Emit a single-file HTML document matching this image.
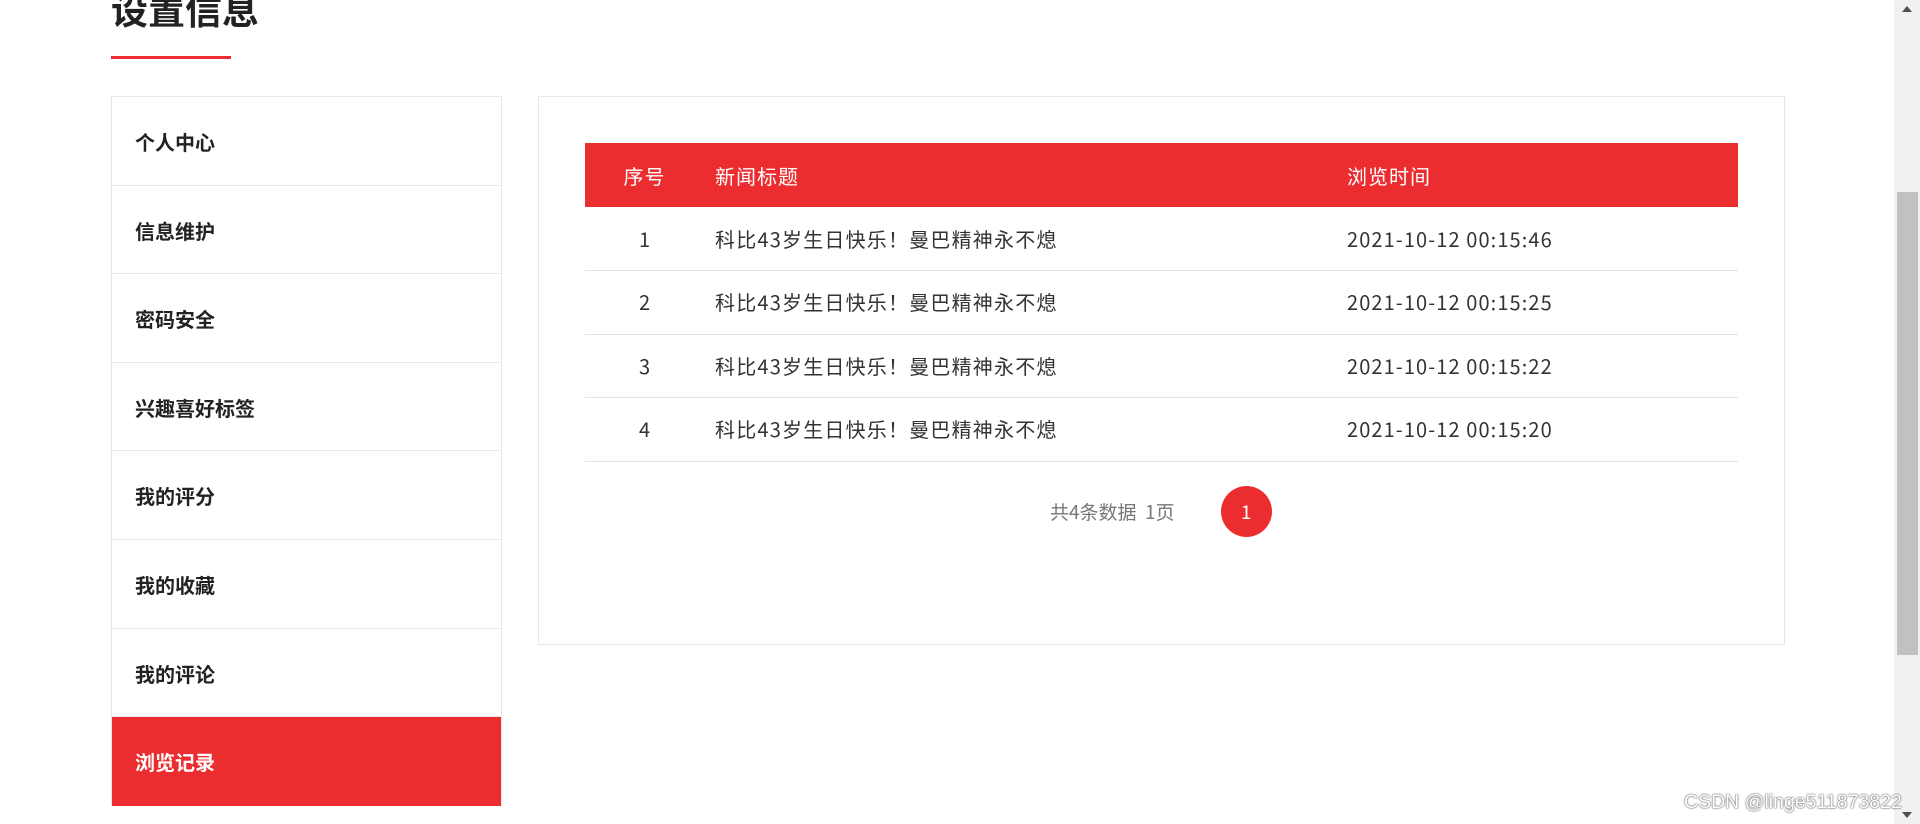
<!DOCTYPE html>
<html><head><meta charset="utf-8"><style>
*{margin:0;padding:0;box-sizing:border-box}
body{width:1920px;height:824px;background:#fff;overflow:hidden;position:relative;font-family:"Liberation Sans","Noto Sans CJK SC",sans-serif;color:#222}
.title{position:absolute;left:111px;top:-10px;font-size:37px;font-weight:bold;color:#222;line-height:44px}
.line{position:absolute;left:111px;top:56px;width:120px;height:3px;background:#ec2d2f}
.side{position:absolute;left:111px;top:96px;width:391px;border:1px solid #e8e8e8;border-bottom:none}
.side div{height:88.6px;border-bottom:1px solid #e8e8e8;font-size:20px;font-weight:bold;padding-left:23px;line-height:94px;color:#222}
.side div.on{background:#ec2d2f;color:#fff;border-bottom:none}
.panel{position:absolute;left:538px;top:96px;width:1247px;height:549px;border:1px solid #e8e8e8}
table{position:absolute;left:46px;top:46px;width:1153px;border-collapse:collapse;font-size:20px;font-family:"Noto Sans CJK SC",sans-serif}
th{background:#ec2d2f;color:#fff;font-weight:normal;height:64px;text-align:left;letter-spacing:1px}
td{height:63.5px;border-bottom:1px solid #e3e3e3;color:#333;line-height:24px}
td.t{letter-spacing:1.2px}
td.d{letter-spacing:1.1px}
.c1{width:130px;text-align:center;padding-right:11px}
.c2{width:632px}
.pg{position:absolute;left:511px;top:389px;font-size:19px;color:#777;line-height:51px;font-family:"Noto Sans CJK SC",sans-serif}
.pg span.n{display:inline-block;width:51px;height:51px;border-radius:50%;background:#ec2d2f;color:#fff;text-align:center;margin-left:46px;vertical-align:top}
.sb{position:absolute;left:1894px;top:0;width:26px;height:824px;background:#f1f1f1}
.th{position:absolute;left:1897px;top:192px;width:21px;height:463px;background:#c1c1c1}
.wm{position:absolute;left:1684px;top:791px;font-size:19.5px;color:#fff;text-shadow:0 0 2px #666,0 0 1px #333}
</style></head><body>
<div class="title">设置信息</div>
<div class="line"></div>
<div class="side">
<div>个人中心</div><div>信息维护</div><div>密码安全</div><div>兴趣喜好标签</div><div>我的评分</div><div>我的收藏</div><div>我的评论</div><div class="on">浏览记录</div>
</div>
<div class="panel">
<table>
<tr><th class="c1">序号</th><th class="c2">新闻标题</th><th>浏览时间</th></tr>
<tr><td class="c1">1</td><td class="t">科比43岁生日快乐！曼巴精神永不熄</td><td class="d">2021-10-12 00:15:46</td></tr>
<tr><td class="c1">2</td><td class="t">科比43岁生日快乐！曼巴精神永不熄</td><td class="d">2021-10-12 00:15:25</td></tr>
<tr><td class="c1">3</td><td class="t">科比43岁生日快乐！曼巴精神永不熄</td><td class="d">2021-10-12 00:15:22</td></tr>
<tr><td class="c1">4</td><td class="t">科比43岁生日快乐！曼巴精神永不熄</td><td class="d">2021-10-12 00:15:20</td></tr>
</table>
<div class="pg">共4条数据&nbsp;&nbsp;1页<span class="n">1</span></div>
</div>
<div class="sb"></div><div class="th"></div>
<svg style="position:absolute;left:1900px;top:4px" width="14" height="10"><path d="M2 8 L7 2 L12 8Z" fill="#505050"/></svg>
<svg style="position:absolute;left:1900px;top:810px" width="14" height="10"><path d="M2 2 L7 8 L12 2Z" fill="#505050"/></svg>
<div class="wm">CSDN @linge511873822</div>
</body></html>
